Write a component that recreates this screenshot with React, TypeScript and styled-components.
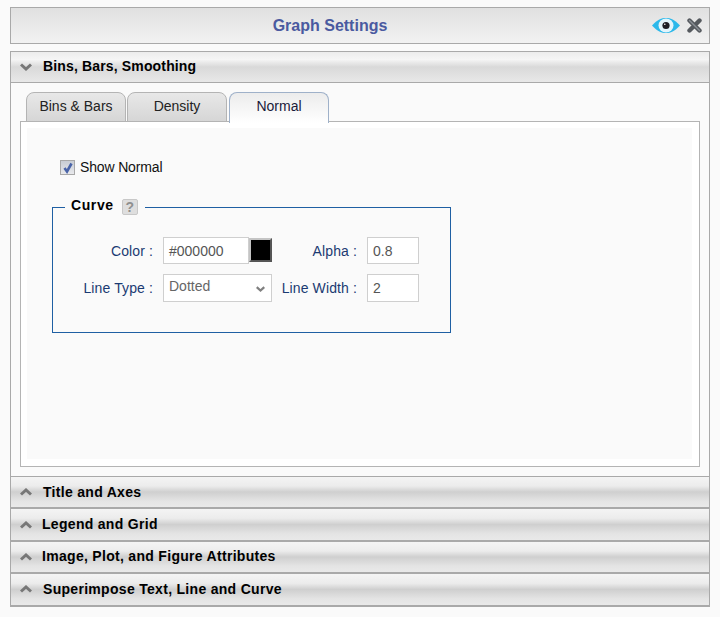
import React from 'react';
import styled, { createGlobalStyle } from 'styled-components';

const GlobalStyle = createGlobalStyle`
  html, body {
    margin: 0;
    padding: 0;
    background: #fafafa;
    font-family: "Liberation Sans", Arial, sans-serif;
  }
`;

const Page = styled.div`
  width: 700px;
  height: 610px;
  padding: 7px 10px 0;
  display: flex;
  flex-direction: column;
  box-sizing: content-box;
`;

const TitleBar = styled.div`
  height: 35px;
  border: 1px solid #a9a9a9;
  box-sizing: content-box;
  width: 698px;
  background: linear-gradient(#e0e0e0, #f2f2f2);
  display: flex;
  align-items: center;
  position: relative;
  justify-content: center;
`;

const Title = styled.div`
  font-size: 16px;
  font-weight: bold;
  color: #4a5aa0;
  margin-right: 60px;
`;

const TitleIcons = styled.div`
  position: absolute;
  right: 7px;
  top: 10px;
  display: flex;
  align-items: center;
  gap: 7px;
`;

const Accordion = styled.div`
  margin-top: 7px;
  width: 698px;
  border: 1px solid #a9a9a9;
  border-bottom: 0;
`;

const SectionHeader = styled.div<{ $open?: boolean; $textOffset: number }>`
  height: ${({ $open }) => ($open ? '30px' : '30.4px')};
  display: flex;
  align-items: center;
  padding-left: 9px;
  background: ${({ $open }) =>
    $open
      ? 'linear-gradient(#ececec 0%, #f5f5f5 25%, #d9d9d9 50%, #e8e8e8 100%)'
      : 'linear-gradient(#f4f4f4 0%, #ececec 30%, #cfcfcf 50%, #e4e4e4 80%, #e9e9e9 100%)'};
  border-bottom: ${({ $open }) => ($open ? '1px solid #a9a9a9' : '2px solid #a9a9a9')};
  font-size: 14px;
  font-weight: bold;
  color: #000;
  letter-spacing: ${({ $open }) => ($open ? 0.15 : 0.3)}px;

  & > span {
    margin-left: ${({ $textOffset }) => $textOffset}px;
    margin-top: ${({ $open }) => ($open ? -3 : -1)}px;
  }
`;

const SectionBody = styled.div`
  height: 384px;
  padding: 9px 9px 0;
  border-bottom: 1px solid #a9a9a9;
  background: #fafafa;
`;

const TabRow = styled.div`
  display: flex;
  height: 30px;
  padding-left: 6px;
  margin-bottom: -1px;
  position: relative;
`;

const Tab = styled.div<{ $active?: boolean }>`
  width: 98px;
  margin-right: 1px;
  margin-left: ${({ $active }) => ($active ? 1 : 0)}px;
  border: 1px solid ${({ $active }) => ($active ? '#9fb1c9' : '#b4b4b4')};
  border-bottom: ${({ $active }) => ($active ? '0' : '1px solid #b4b4b4')};
  border-radius: 8px 8px 0 0;
  background: ${({ $active }) =>
    $active ? 'linear-gradient(#ececec, #ffffff)' : 'linear-gradient(#e8e8e8, #d6d6d6)'};
  font-size: 14px;
  display: flex;
  align-items: center;
  justify-content: center;
  box-sizing: content-box;
  height: 26px;
  padding-bottom: ${({ $active }) => ($active ? 4 : 2)}px;
  color: ${({ $active }) => ($active ? '#1a1a3a' : '#222')};
`;

const TabPanel = styled.div`
  width: 665px;
  height: 331px;
  border: 1px solid #b4b4b4;
  background: #fff;
  padding: 6px 7px 7px 6px;
  box-sizing: content-box;
`;

const Inner = styled.div`
  height: 331px;
  background: #fafafa;
  padding: 30px 0 0 25px;
  box-sizing: border-box;
`;

const CheckRow = styled.label`
  display: flex;
  align-items: center;
  gap: 5px;
  margin-left: 8px;
  height: 17px;
  font-size: 14px;
  color: #111;
  letter-spacing: -0.15px;
`;

const CheckBox = styled.span`
  width: 13px;
  height: 13px;
  margin-top: 2px;
  border: 1px solid #a8a8a8;
  background: linear-gradient(#c8ccd4, #e8e9ec);
  display: flex;
  align-items: center;
  justify-content: center;
`;

const Fieldset = styled.fieldset`
  width: 399px;
  height: 136px;
  margin: 22px 0 0;
  padding: 0;
  border: 1px solid #1f5fa3;
  box-sizing: border-box;
  position: relative;
`;

const Legend = styled.legend`
  margin-left: 12px;
  padding: 0 7px 4px 6px;
  display: flex;
  align-items: center;
  gap: 8px;
  font-size: 14px;
  font-weight: bold;
  letter-spacing: 0.6px;
  color: #000;
  height: 16px;
`;

const HelpBadge = styled.span`
  width: 14px;
  height: 14px;
  border: 1px solid #c8c8c8;
  border-radius: 2px;
  background: #dedede;
  color: #8f8f8f;
  font-size: 14px;
  letter-spacing: 0;
  display: flex;
  align-items: center;
  justify-content: center;
  margin-top: 4px;
`;

const FormRow = styled.div<{ $top: number }>`
  display: flex;
  align-items: center;
  margin-top: ${({ $top }) => $top}px;
`;

const Label = styled.div<{ $width: number }>`
  width: ${({ $width }) => $width}px;
  text-align: right;
  font-size: 14px;
  letter-spacing: 0.12px;
  color: #1a3a72;
  margin-right: 10px;
  white-space: pre;
`;

const TextInput = styled.div<{ $width: number; $height: number }>`
  width: ${({ $width }) => $width}px;
  height: ${({ $height }) => $height}px;
  border: 1px solid #cfcfcf;
  background: #fff;
  box-sizing: border-box;
  padding-left: 5px;
  font-size: 14px;
  color: #555;
  display: flex;
  align-items: center;
`;

const Swatch = styled.div`
  width: 23px;
  height: 24px;
  margin-top: -2px;
  box-sizing: border-box;
  background: #000;
  border: 2px solid #707070;
  border-color: #c4c4c4 #555 #555 #c4c4c4;
`;

const SelectBox = styled.div`
  width: 109px;
  height: 28px;
  border: 1px solid #cfcfcf;
  background: #fff;
  box-sizing: border-box;
  padding: 0 6px 0 5px;
  font-size: 14px;
  color: #666;
  display: flex;
  align-items: center;
  justify-content: space-between;

  & > span {
    margin-top: -5px;
  }

  & > svg {
    margin-top: 2px;
  }
`;

const EyeIcon = () => (
  <svg width="28" height="15" viewBox="0 0 28 15">
    <path d="M0 7.5C5.5 1.5 9.5 0 14 0S22.5 1.5 28 7.5C22.5 13.5 18.5 15 14 15S5.5 13.5 0 7.5Z" fill="#2bb8ea" />
    <ellipse cx="14" cy="7.5" rx="7.5" ry="7" fill="#e2f4fb" />
    <circle cx="14" cy="7.5" r="3.6" fill="#1c1c24" />
    <circle cx="12.8" cy="6.2" r="0.8" fill="#fff" />
  </svg>
);

const CloseIcon = () => (
  <svg width="15" height="15" viewBox="0 0 15 15">
    <path d="M2.5 2.5L12.5 12.5M12.5 2.5L2.5 12.5" stroke="#55595e" strokeWidth="4.4" strokeLinecap="round" />
    <path d="M2.5 2.5L12.5 12.5" stroke="#8a8f95" strokeWidth="1.4" strokeLinecap="round" />
  </svg>
);

const Chevron = ({ up, width = 12, color = '#777' }: { up?: boolean; width?: number; color?: string }) => (
  <svg width={width} height={(width * 2) / 3} viewBox="0 0 12 8">
    <path d={up ? 'M1 6.5L6 2L11 6.5' : 'M1 1.5L6 6L11 1.5'} fill="none" stroke={color} strokeWidth="3" />
  </svg>
);

const closedSections = [
  { title: 'Title and Axes', offset: 11 },
  { title: 'Legend and Grid', offset: 10 },
  { title: 'Image, Plot, and Figure Attributes', offset: 10 },
  { title: 'Superimpose Text, Line and Curve', offset: 11 },
];

export default function App() {
  return (
    <Page>
      <GlobalStyle />
      <TitleBar>
        <Title>Graph Settings</Title>
        <TitleIcons>
          <EyeIcon />
          <CloseIcon />
        </TitleIcons>
      </TitleBar>
      <Accordion>
        <SectionHeader $open $textOffset={11}>
          <Chevron />
          <span>Bins, Bars, Smoothing</span>
        </SectionHeader>
        <SectionBody>
          <TabRow>
            <Tab>Bins &amp; Bars</Tab>
            <Tab>Density</Tab>
            <Tab $active>Normal</Tab>
          </TabRow>
          <TabPanel>
            <Inner>
              <CheckRow>
                <CheckBox>
                  <svg width="12" height="12" viewBox="0 0 12 12">
                    <path d="M2.5 6L5 9.5L9.5 1.5" fill="none" stroke="#4a64a8" strokeWidth="2.6" />
                  </svg>
                </CheckBox>
                Show Normal
              </CheckRow>
              <Fieldset>
                <Legend>
                  Curve
                  <HelpBadge>?</HelpBadge>
                </Legend>
                <FormRow $top={20}>
                  <Label $width={100}>Color :</Label>
                  <TextInput $width={86} $height={27}>#000000</TextInput>
                  <Swatch />
                  <Label $width={85}>Alpha :</Label>
                  <TextInput $width={52} $height={27}>0.8</TextInput>
                </FormRow>
                <FormRow $top={10}>
                  <Label $width={100}>Line Type :</Label>
                  <SelectBox>
                    <span>Dotted</span>
                    <Chevron width={9} color="#808080" />
                  </SelectBox>
                  <Label $width={85}>Line Width :</Label>
                  <TextInput $width={52} $height={28}>2</TextInput>
                </FormRow>
              </Fieldset>
            </Inner>
          </TabPanel>
        </SectionBody>
        {closedSections.map((section) => (
          <SectionHeader key={section.title} $textOffset={section.offset}>
            <Chevron up />
            <span>{section.title}</span>
          </SectionHeader>
        ))}
      </Accordion>
    </Page>
  );
}
